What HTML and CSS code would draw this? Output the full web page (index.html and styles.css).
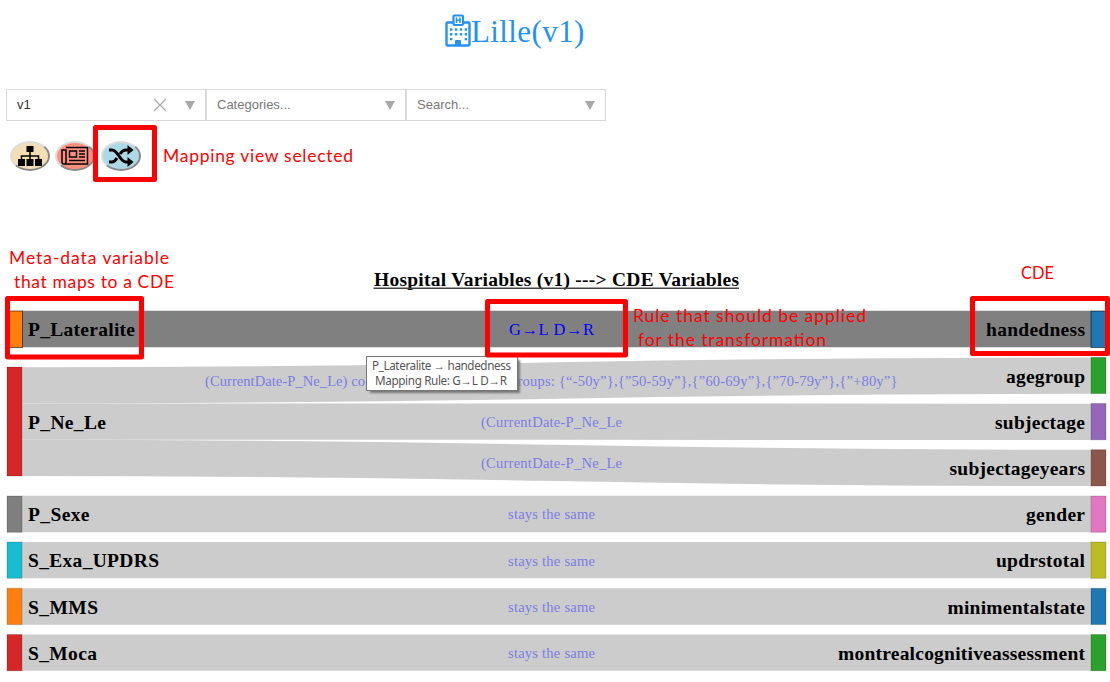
FILE: index.html
```html
<!DOCTYPE html>
<html lang="en">
<head>
<meta charset="utf-8">
<title>Lille(v1)</title>
<link rel="stylesheet" href="styles.css">
</head>
<body>
<header class="title">
  <svg class="hospital" viewBox="0 0 26 33" width="26" height="33">
    <path d="M8 8.500H2.500Q1.500 8.500 1.500 9.500V29.500Q1.500 31.500 3 31.500H23Q24.500 31.500 24.500 29.500V9.500Q24.500 8.500 23.500 8.500H18" fill="none" stroke="currentColor" stroke-width="2.400"/>
    <rect x="8.500" y="1.500" width="9.500" height="9.500" rx="1" fill="none" stroke="currentColor" stroke-width="2.200"/>
    <path d="M11.500 3.500V9M15 3.500V9M11.500 6.200H15" fill="none" stroke="currentColor" stroke-width="1.600"/>
    <path d="M5 15.500H22M5 20.300H22M5 25.100H8M19.700 25.100H22" fill="none" stroke="currentColor" stroke-width="2.400" stroke-dasharray="2.400 2.500"/>
    <path d="M10 31V27Q10 26 11 26H15Q16 26 16 27V31Z" fill="currentColor"/>
  </svg>
  <span class="title-text">Lille(v1)</span>
</header>
<div class="filters">
  <div class="select"><span class="value">v1</span>
    <svg class="clear" width="14" height="14" viewBox="0 0 14 14"><path d="M1 1L13 13M13 1L1 13" stroke="#aaa" stroke-width="1.300"/></svg>
    <i class="arrow"></i></div>
  <div class="select"><span class="hint">Categories...</span><i class="arrow"></i></div>
  <div class="select"><span class="hint">Search...</span><i class="arrow"></i></div>
</div>
<nav class="views">
  <button class="view tree" aria-label="Tree"><svg width="26" height="22" viewBox="0 0 26 22"><path d="M9.500 1h7v6h-7zM1 14h7v7H1zM9.500 14h7v7h-7zM18 14h7v7h-7z"/><path d="M13 6v9M4.500 15v-4h17v4" fill="none" stroke="#000" stroke-width="1.500"/></svg></button>
  <button class="view news" aria-label="Details"><svg width="28" height="20" viewBox="0 0 28 20" fill="none" stroke="#000" stroke-width="1.500"><path d="M5 1.500H26.500V18H3Q1 18 1 16V4H5V16Q5 18 3 18"/><rect x="8.500" y="5" width="7" height="6"/><path d="M18 5h6M18 8h6M18 11h6M8 14.500h16"/></svg></button>
  <button class="view mapping" aria-label="Mapping"><svg width="26" height="22" viewBox="0 0 26 22"><path d="M1 5H4C10 5 12 17 18 17H21M1 17H4C6 17 7.500 15.500 9 13M12 9C13.500 6.500 15 5 18 5H21" fill="none" stroke="#000" stroke-width="3"/><path d="M19.500 0L25.500 5L19.500 10zM19.500 12L25.500 17L19.500 22z"/></svg></button>
</nav>
<main>
<svg class="sankey" width="1110" height="427" viewBox="0 255 1110 427">
  <text class="heading" x="374" y="286" textLength="365">Hospital Variables (v1) ---&gt; CDE Variables</text>
  <path class="underline" d="M373.500 288.200H739"/>
  <g class="links">
    <path class="active" d="M22 329H1091"/>
    <path d="M22 385.300C557 385.300 557 375.700 1091 375.700"/>
    <path d="M22 421.600C557 421.600 557 421.800 1091 421.800"/>
    <path d="M22 457.900C557 457.900 557 467.900 1091 467.900"/>
    <path d="M22 514H1091M22 560.200H1091M22 606.500H1091M22 652.700H1091"/>
  </g>
  <g class="nodes">
    <rect class="selected" x="7.500" y="311" width="15" height="36.500" fill="#ff7f0e"/>
    <rect x="7" y="367" width="15" height="109" fill="#d62728"/>
    <rect x="7" y="496" width="15" height="36.300" fill="#7f7f7f"/>
    <rect x="7" y="542" width="15" height="36.300" fill="#17becf"/>
    <rect x="7" y="588.300" width="15" height="36.300" fill="#ff7f0e"/>
    <rect x="7" y="634.500" width="15" height="36.300" fill="#d62728"/>
    <rect class="selected" x="1091" y="311" width="15" height="36.500" fill="#1f77b4"/>
    <rect x="1091" y="357.300" width="15" height="36.300" fill="#2ca02c"/>
    <rect x="1091" y="403.500" width="15" height="36.300" fill="#9467bd"/>
    <rect x="1091" y="449.700" width="15" height="36.300" fill="#8c564b"/>
    <rect x="1091" y="496" width="15" height="36.300" fill="#e377c2"/>
    <rect x="1091" y="542" width="15" height="36.300" fill="#bcbd22"/>
    <rect x="1091" y="588.300" width="15" height="36.300" fill="#1f77b4"/>
    <rect x="1091" y="634.500" width="15" height="36.300" fill="#2ca02c"/>
  </g>
  <g class="names">
    <text x="28" y="336" textLength="107">P_Lateralite</text>
    <text x="28" y="429" textLength="78">P_Ne_Le</text>
    <text x="28" y="521" textLength="61.500">P_Sexe</text>
    <text x="28" y="567" textLength="131">S_Exa_UPDRS</text>
    <text x="28" y="614" textLength="70">S_MMS</text>
    <text x="28" y="660" textLength="69">S_Moca</text>
    <text x="986" y="336" textLength="99">handedness</text>
    <text x="1006" y="382.500" textLength="79">agegroup</text>
    <text x="995" y="429" textLength="90">subjectage</text>
    <text x="949.500" y="475" textLength="135.500">subjectageyears</text>
    <text x="1026" y="521" textLength="59">gender</text>
    <text x="996" y="567" textLength="89">updrstotal</text>
    <text x="947.500" y="614" textLength="137.500">minimentalstate</text>
    <text x="838" y="660" textLength="247">montrealcognitiveassessment</text>
  </g>
  <g class="rules">
    <text class="rule-active" x="509" y="335" textLength="85">G→L D→R</text>
    <text x="205" y="386" textLength="160">(CurrentDate-P_Ne_Le) co</text>
    <text x="517.500" y="386" textLength="380">roups: {“-50y”},{”50-59y”},{”60-69y”},{”70-79y”},{”+80y”}</text>
    <text x="481" y="427" textLength="141">(CurrentDate-P_Ne_Le</text>
    <text x="481" y="468" textLength="141">(CurrentDate-P_Ne_Le</text>
    <text x="508" y="519" textLength="87">stays the same</text>
    <text x="508" y="566" textLength="87">stays the same</text>
    <text x="508" y="612" textLength="87">stays the same</text>
    <text x="508" y="658" textLength="87">stays the same</text>
  </g>
</svg>
</main>
<svg class="annotations" width="1110" height="682" viewBox="0 0 1110 682">
  <g class="tooltip">
    <rect class="shadow" x="370" y="360" width="150" height="33"/>
    <rect class="panel" x="366.500" y="356.500" width="151" height="34"/>
    <text x="372" y="370" textLength="139">P_Lateralite → handedness</text>
    <text x="375" y="385" textLength="132">Mapping Rule: G→L D→R</text>
  </g>
  <g class="frames">
    <rect x="95.500" y="127.500" width="59" height="52"/>
    <rect x="7.500" y="298.500" width="134" height="58.500"/>
    <rect x="487.500" y="301.500" width="138" height="53.500"/>
    <rect x="972.500" y="298.500" width="135" height="55"/>
  </g>
  <g class="notes">
    <text x="163" y="162" textLength="190">Mapping view selected</text>
    <text x="9" y="264" textLength="160">Meta-data variable</text>
    <text x="14" y="288" textLength="160">that maps to a CDE</text>
    <text x="1021" y="279" textLength="33" lengthAdjust="spacingAndGlyphs">CDE</text>
    <text x="633" y="322" textLength="233">Rule that should be applied</text>
    <text x="638" y="346" textLength="188">for the transformation</text>
  </g>
</svg>
</body>
</html>
```
FILE: styles.css
```css
body {
  position: relative;
  width: 1110px;
  height: 682px;
  margin: 0;
  overflow: hidden;
  background: #fff;
  font-family: "Liberation Serif", serif;
}
.title {
  display: flex;
  box-sizing: border-box;
  height: 89px;
  padding: 14px 0 0 445px;
  color: #2492f2;
}
.title-text { font-size: 31px; line-height: 36px; letter-spacing: 0.4px; }
.filters {
  display: flex;
  padding-left: 6px;
  font-family: "Liberation Sans", sans-serif;
  font-size: 13px;
}
.select {
  display: flex;
  align-items: center;
  box-sizing: border-box;
  width: 200px;
  height: 32px;
  padding: 0 10px;
  border: 1px solid #d9d9d9;
}
.value, .hint { flex: 1; line-height: 30px; }
.value { color: #333; }
.hint { color: #777; }
.clear { margin-right: 18px; }
.arrow {
  border: 5px solid transparent;
  border-top: 9px solid #a8a8a8;
  border-bottom: 0;
}
.views {
  display: flex;
  box-sizing: border-box;
  height: 134px;
  padding: 20px 0 0 10px;
  gap: 5px;
}
.view {
  display: flex;
  align-items: center;
  justify-content: center;
  width: 40px;
  height: 30px;
  padding: 0;
  border: 2px outset #ddd;
  border-radius: 50%;
}
.view svg { flex: none; }
.tree { background: #f5deb3; }
.news { background: #ff9080; }
.mapping { margin-left: 1px; background: #add8e6; }
.sankey { display: block; }
.heading { font-size: 19.5px; font-weight: bold; }
.underline { stroke: #444; stroke-width: 1.5; }
.links path { fill: none; stroke: #ccc; stroke-width: 36.3; }
.links .active { stroke: #808080; }
.nodes rect { stroke: rgba(0, 0, 0, 0.18); stroke-width: 1; }
.nodes .selected { stroke: rgba(0, 0, 0, 0.55); }
.names { font-size: 19.5px; font-weight: bold; }
.rules { fill: #7c7ce4; font-size: 14.6px; }
.rules .rule-active { fill: #00f; font-size: 16.5px; }
.annotations { position: absolute; top: 0; left: 0; pointer-events: none; }
.shadow { fill: #777; filter: blur(1px); }
.panel { fill: #fff; stroke: #767676; }
.tooltip text { fill: #555; font: 11.7px "Noto Sans", sans-serif; }
.frames rect { fill: none; stroke: #f00; stroke-width: 5; stroke-linejoin: round; }
.notes { fill: #f00; font: 17.5px Lato, sans-serif; }
```
